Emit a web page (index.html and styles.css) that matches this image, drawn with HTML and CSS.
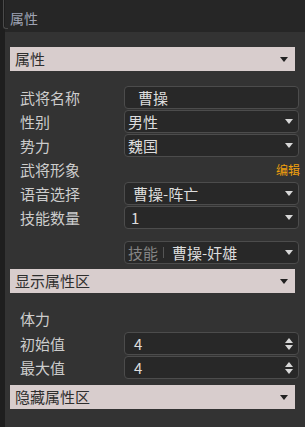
FILE: index.html
```html
<!DOCTYPE html>
<html lang="zh">
<head>
  <meta charset="UTF-8" />
  <title>属性</title>
  <link rel="stylesheet" href="styles.css">
</head>
<body>
  <div id="panel">
    <div class="tab-head"><span class="tab-title">属性</span></div>

    <div class="contenido">
      <div class="seccion seccion-primera">属性<span class="flecha-oscura"></span></div>

      <div class="lista">
        <div class="fila">
          <span class="etiqueta">武将名称</span>
          <div class="caja caja-texto">曹操</div>
        </div>
        <div class="fila">
          <span class="etiqueta">性别</span>
          <div class="caja caja-select">男性<span class="flecha"></span></div>
        </div>
        <div class="fila">
          <span class="etiqueta">势力</span>
          <div class="caja caja-select">魏国<span class="flecha"></span></div>
        </div>
        <div class="fila">
          <span class="etiqueta">武将形象</span>
          <a class="editar">编辑</a>
        </div>
        <div class="fila">
          <span class="etiqueta">语音选择</span>
          <div class="caja caja-select voz">曹操-阵亡<span class="flecha"></span></div>
        </div>
        <div class="fila">
          <span class="etiqueta">技能数量</span>
          <div class="caja caja-select num">1<span class="flecha"></span></div>
        </div>
      </div>

      <div class="fila fila-skill">
        <span class="etiqueta"></span>
        <div class="caja caja-select skill">
          <span class="prefijo">技能</span><span class="sep"></span>曹操-奸雄<span class="flecha"></span>
        </div>
      </div>

      <div class="seccion seccion-mostrar">显示属性区<span class="flecha-oscura"></span></div>

      <div class="fila fila-vida">
        <span class="etiqueta">体力</span>
      </div>
      <div class="lista lista-vida">
        <div class="fila">
          <span class="etiqueta">初始值</span>
          <div class="caja caja-num">4<span class="spin"><i class="sube"></i><i class="baja"></i></span></div>
        </div>
        <div class="fila">
          <span class="etiqueta">最大值</span>
          <div class="caja caja-num">4<span class="spin"><i class="sube"></i><i class="baja"></i></span></div>
        </div>
      </div>

      <div class="seccion seccion-ocultar">隐藏属性区<span class="flecha-oscura"></span></div>
    </div>
  </div>
</body>
</html>
```

FILE: styles.css
```css
body {
  margin: 0; padding: 0;
  background: #1e1e1e;
  font-family: "Noto Sans CJK SC", "Noto Sans", sans-serif;
}
#panel {
  margin-left: 5px;
  width: 300px;
  height: 427px;
  background: #333333;
}
.tab-head {
  height: 32px;
  background: #262626;
  box-sizing: border-box;
  padding: 5px 0 0 5px;
  position: relative;
}
.tab-head::before {
  content: "";
  position: absolute;
  left: -2px;
  top: 0;
  width: 4px;
  height: 28px;
  border-left: 1px solid #4a4a4a;
  border-bottom: 1px solid #4a4a4a;
  border-bottom-left-radius: 3px;
}
.tab-title {
  font-size: 14px;
  line-height: 18px;
  color: #9ea3b4;
}
.contenido {
  padding: 15px 0 0 5px;
}
.seccion {
  width: 285px;
  height: 24px;
  box-sizing: border-box;
  background: #d8cdcd;
  color: #2e2e2e;
  font-size: 15px;
  line-height: 24px;
  padding-left: 5px;
  display: flex;
  align-items: center;
}
.flecha-oscura {
  margin-left: auto;
  margin-right: 7px;
  width: 0; height: 0;
  border-left: 4px solid transparent;
  border-right: 4px solid transparent;
  border-top: 5px solid #222;
}
.lista {
  margin-top: 15px;
  display: flex;
  flex-direction: column;
  gap: 1px;
}
.fila {
  height: 23px;
  display: flex;
  align-items: center;
  padding-left: 10px;
}
.etiqueta {
  width: 104px;
  flex: none;
  font-size: 15px;
  color: #cdcdcd;
}
.caja {
  width: 175px;
  height: 23px;
  box-sizing: border-box;
  border: 1px solid #4c4c4c;
  border-radius: 4px;
  background: #282828;
  color: #dddddd;
  font-size: 15px;
  line-height: 21px;
  display: flex;
  align-items: center;
  padding-left: 3px;
}
.caja-texto {
  padding-left: 13px;
}
.voz { padding-left: 8px; }
.num { padding-left: 6px; }
.flecha {
  margin-left: auto;
  margin-right: 5px;
  width: 0; height: 0;
  border-left: 4px solid transparent;
  border-right: 4px solid transparent;
  border-top: 5px solid #d8d8d8;
}
.editar {
  margin-left: auto;
  margin-right: 5px;
  font-size: 12px;
  color: #f0a00c;
}
.fila-skill {
  margin-top: 12px;
}
.skill .prefijo {
  color: #858585;
}
.skill .sep {
  width: 1px;
  height: 11px;
  background: #555;
  margin: 0 8px 0 5px;
}
.seccion-mostrar {
  margin-top: 5px;
}
.fila-vida {
  margin-top: 14px;
}
.lista-vida {
  margin-top: 2px;
}
.caja-num {
  padding-left: 9px;
}
.spin {
  margin-left: auto;
  margin-right: 5px;
  display: flex;
  flex-direction: column;
  gap: 2px;
}
.spin i {
  display: block;
  width: 0; height: 0;
  border-left: 4px solid transparent;
  border-right: 4px solid transparent;
}
.spin .sube { border-bottom: 5px solid #d8d8d8; }
.spin .baja { border-top: 5px solid #d8d8d8; }
.seccion-ocultar {
  margin-top: 6px;
}
```
